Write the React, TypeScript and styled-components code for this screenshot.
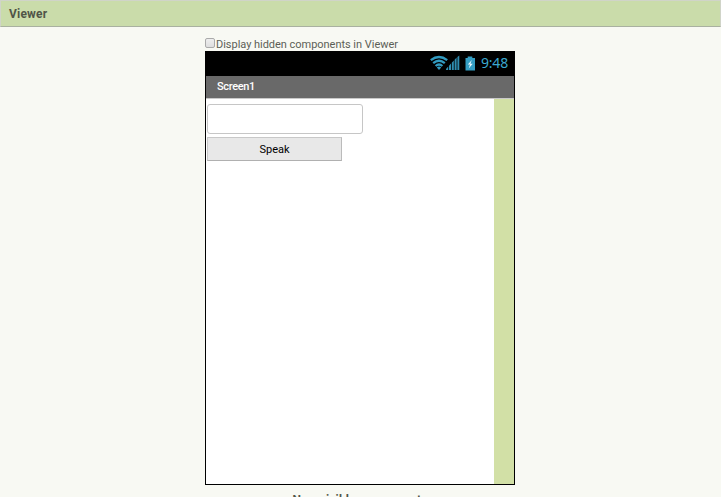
import React from 'react';
import styled, { createGlobalStyle } from 'styled-components';

const GlobalStyle = createGlobalStyle`
  * { box-sizing: border-box; }
  html, body { margin: 0; height: 100%; overflow: hidden; }
  body { background: #f8f9f3; font-family: Roboto, "Liberation Sans", sans-serif; }
`;

const Page = styled.div`
  height: 497px;
  overflow: hidden;
`;

const PanelHeader = styled.header`
  height: 27px;
  padding-left: 8px;
  background: #cadcaa;
  border: 1px solid #d0d4c8;
  border-bottom-color: #a9b1a0;
  color: #505547;
  font-size: 12px;
  font-weight: 700;
  letter-spacing: 0.2px;
  line-height: 26px;
`;

const Viewer = styled.main`
  width: 310px;
  margin: 10px 0 0 205px;
`;

const HiddenToggle = styled.label`
  display: flex;
  align-items: flex-start;
  height: 14px;
  color: #5c5f57;
  font-size: 11px;
  line-height: 15px;
  white-space: nowrap;
`;

const Checkbox = styled.input`
  appearance: none;
  width: 10px;
  height: 10px;
  margin: 1px 1px 0 0;
  border: 1px solid #aaa;
  border-radius: 2px;
  background: linear-gradient(#eee, #dedede);
`;

const ToggleText = styled.span`
  display: block;
  letter-spacing: -0.03px;
`;

const Phone = styled.section`
  display: flex;
  flex-direction: column;
  height: 434px;
  border: 1px solid #000;
  background: #fff;
`;

const StatusBar = styled.div`
  display: flex;
  align-items: flex-start;
  justify-content: flex-end;
  height: 24px;
  padding-right: 5px;
  background: #000;
  color: #3ba8d0;
`;

const StatusIcons = styled.svg`
  display: block;
  width: 47px;
  height: 24px;
  margin-right: 4px;
`;

const Clock = styled.span`
  width: 28px;
  font-family: "Noto Sans", "Open Sans", sans-serif;
  font-size: 14px;
  letter-spacing: -0.2px;
  line-height: 22px;
  white-space: nowrap;
`;

const TitleBar = styled.div`
  height: 23px;
  padding-left: 11px;
  background: #696969;
  border-bottom: 1px solid #c9c9c9;
  color: #fff;
  font-size: 11px;
  font-weight: 500;
  letter-spacing: -0.35px;
  line-height: 21px;
`;

const ScreenBody = styled.div`
  display: flex;
  flex: 1;
  justify-content: space-between;
`;

const Components = styled.div`
  display: flex;
  flex-direction: column;
  gap: 3px;
  padding: 5px 0 0 1px;
`;

const TextBox = styled.input`
  width: 156px;
  height: 30px;
  border: 1px solid #c6c6c6;
  border-radius: 3px;
  background: #fff;
`;

const SpeakButton = styled.button`
  width: 135px;
  height: 24px;
  padding: 2px 0 0;
  border: 1px solid #c8c8c8;
  border-bottom-color: #b0b0b0;
  border-right-color: #bbb;
  background: #e8e8e8;
  color: #000;
  font: 11px/20px Roboto, sans-serif;
`;

const ScrollTrack = styled.div`
  width: 20px;
  background: #d2e0a6;
`;

const Footer = styled.div`
  margin-top: 8px;
  color: #505547;
  font-size: 12px;
  font-weight: 700;
  letter-spacing: 0.15px;
  line-height: 14px;
  text-align: center;
`;

function PhoneStatus() {
  return (
    <StatusIcons viewBox="0 0 47 24" fill="none" aria-hidden="true">
      <g stroke="#329bc1" strokeWidth="2.3">
        <path d="M0.8 8.2Q9 1.8 17.2 8.2" />
        <path d="M3.2 11.2Q9 6.4 14.8 11.2" />
        <path d="M5.6 14Q9 11 12.4 14" />
      </g>
      <path d="M6.8 15.4Q9 13.6 11.2 15.4L9 18Z" fill="#329bc1" />
      <path
        d="M16 18v-1l2.2-2.4V18zM19 18v-4.3l2-2.2V18zM21.8 18v-7.3l2-2.2V18zM24.6 18V7.8l2-2.2V18zM27.4 18V5l1.9-1.6V18z"
        fill="#2f8db0"
      />
      <path d="M37.7 4.5h4.6V6H45v12.5h-9.5V6h2.2z" fill="#349dc2" />
      <path d="M41.8 8l-4 4.6h2.2l-1.3 4 4-4.8h-2.3z" fill="#e9f8fd" />
    </StatusIcons>
  );
}

export default function App() {
  return (
    <>
      <GlobalStyle />
      <Page>
        <PanelHeader>Viewer</PanelHeader>
        <Viewer>
          <HiddenToggle>
            <Checkbox type="checkbox" />
            <ToggleText>Display hidden components in Viewer</ToggleText>
          </HiddenToggle>
          <Phone>
            <StatusBar>
              <PhoneStatus />
              <Clock>9:48</Clock>
            </StatusBar>
            <TitleBar>Screen1</TitleBar>
            <ScreenBody>
              <Components>
                <TextBox aria-label="Text to speak" />
                <SpeakButton>Speak</SpeakButton>
              </Components>
              <ScrollTrack />
            </ScreenBody>
          </Phone>
          <Footer>Non-visible components</Footer>
        </Viewer>
      </Page>
    </>
  );
}
